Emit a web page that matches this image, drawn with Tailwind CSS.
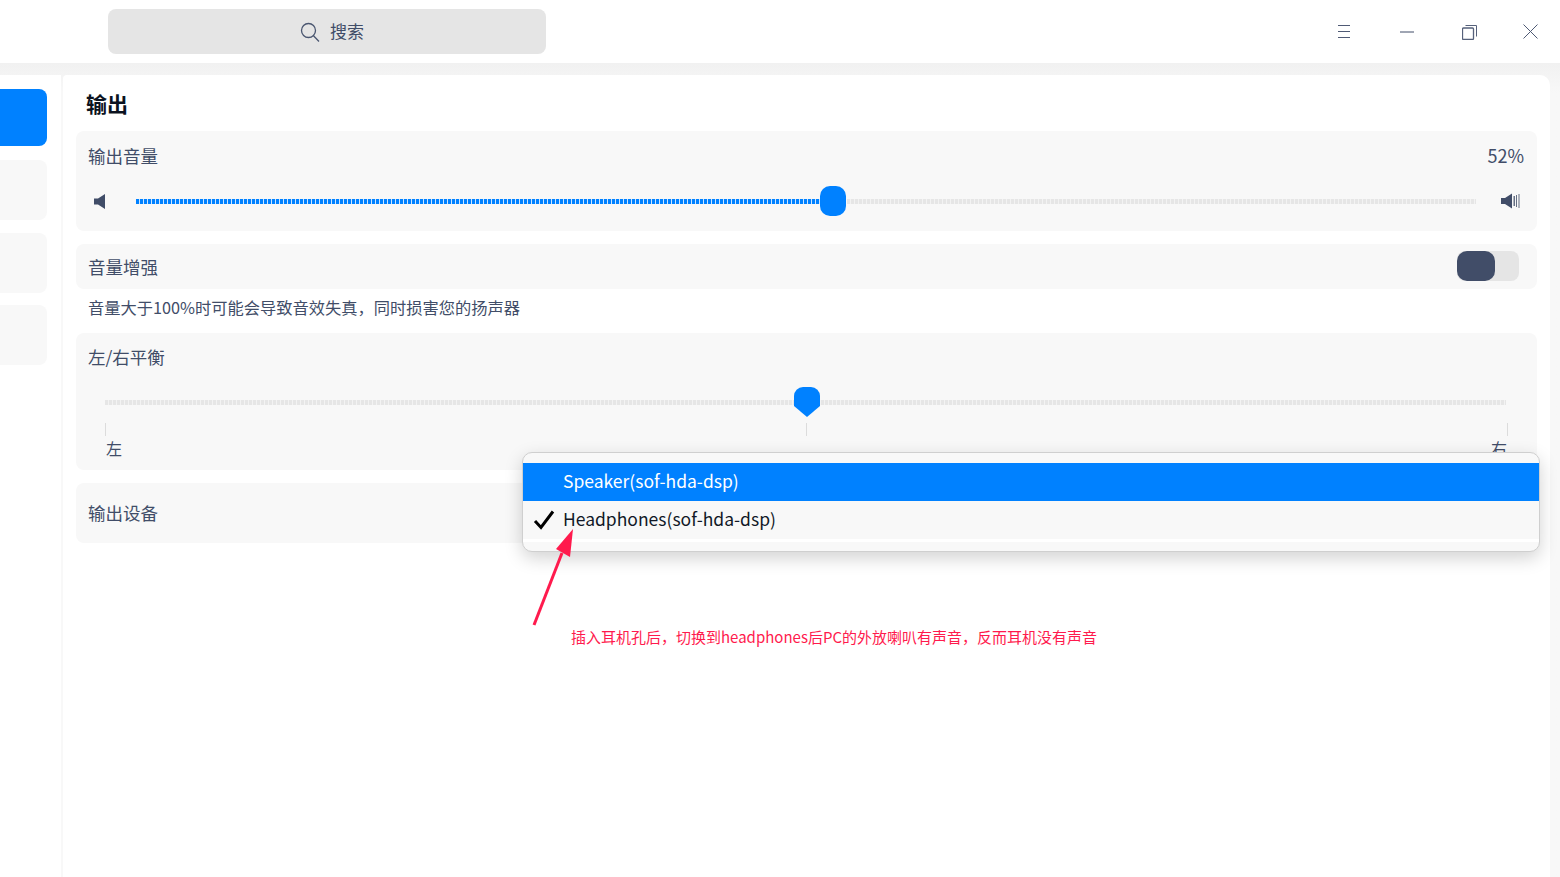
<!DOCTYPE html>
<html lang="zh">
<head>
<meta charset="utf-8">
<script src="https://cdn.jsdelivr.net/npm/@tailwindcss/browser@4"></script>
</head>
<body class="bg-white font-['Noto_Sans_CJK_SC','Noto_Sans',sans-serif] text-[#414d68]">
<div class="relative w-[1560px] h-[877px] overflow-hidden flex flex-col">
  <!-- Title bar -->
  <header class="h-[63px] shrink-0 bg-white flex items-start">
    <div class="ml-[108px] mt-[9px] w-[438px] h-[45px] rounded-[8px] bg-[#e5e5e5] flex items-center justify-center gap-[10px] pl-[10px] text-[17px]">
      <svg width="20" height="20" viewBox="0 0 20 20" fill="none" stroke="#4a5670" stroke-width="1.3"><circle cx="8.500" cy="8.500" r="7"/><path d="M13.500 13.800 19 19.500"/></svg>
      <span class="pb-[2px]">搜索</span>
    </div>
    <div class="ml-auto flex">
      <div class="w-[62px] h-[63px] flex items-center justify-center pl-[2px]">
        <svg width="14" height="13" viewBox="0 0 14 13" fill="none" stroke="#4f5a75" stroke-width="1"><path d="M1 .5h12M1 6.500h12M1 12.500h12"/></svg>
      </div>
      <div class="w-[63px] h-[63px] flex items-center justify-center pl-[2px]">
        <svg width="14" height="2" viewBox="0 0 14 2" fill="none" stroke="#414d68" stroke-width="1"><path d="M0 1h14"/></svg>
      </div>
      <div class="w-[62px] h-[63px] flex items-center justify-center pl-[2px] pt-[1px]">
        <svg width="15" height="15" viewBox="0 0 15 15" fill="none" stroke="#56617b" stroke-width="1"><rect x=".5" y="3" width="11" height="11.500" rx="1" stroke-width="1.300"/><path d="M3.500 .5h11v11"/></svg>
      </div>
      <div class="w-[62px] h-[63px] flex items-center justify-center mr-[-1px]">
        <svg width="15" height="15" viewBox="0 0 15 15" fill="none" stroke="#4f5a75" stroke-width="1"><path d="m.5.5 14 14M14.500.5l-14 14"/></svg>
      </div>
    </div>
  </header>

  <!-- Body -->
  <div class="flex-1 flex pt-[12px] pr-[10px] min-h-0 bg-gradient-to-b from-[#f1f1f1] to-[#f8f8f8] to-[30px]">
    <!-- Sidebar -->
    <aside class="w-[61px] shrink-0 bg-white flex flex-col pt-[14px]">
      <div class="w-[47px] h-[57px] rounded-r-[8px] bg-[#0081ff] mb-[14px]"></div>
      <div class="w-[47px] h-[60px] rounded-r-[8px] bg-[#f8f8f8] mb-[13px]"></div>
      <div class="w-[47px] h-[60px] rounded-r-[8px] bg-[#f8f8f8] mb-[12px]"></div>
      <div class="w-[47px] h-[60px] rounded-r-[8px] bg-[#f8f8f8]"></div>
    </aside>
    <!-- Content -->
    <main class="ml-[2px] flex-1 bg-white rounded-tr-[10px] rounded-tl-[4px] pl-[13px] pr-[13px]">
      <h1 class="h-[56px] pl-[10px] pt-[12px] text-[21px] leading-[32px] font-bold text-[#0b1220]">输出</h1>

      <section class="h-[100px] rounded-[8px] bg-[#f8f8f8] flex flex-col">
        <div class="h-[50px] flex items-center justify-between pl-[12px] pr-[13px] text-[17.500px]">
          <span>输出音量</span><span class="text-[18px] pb-[2px]">52%</span>
        </div>
        <div class="flex items-center pl-[18px] pr-[17px] h-[40px]">
          <svg width="12" height="15" viewBox="0 0 12 15" fill="#414d68" class="shrink-0"><path d="M0 4.500h4L11 0v15L4 10.500H0z"/></svg>
          <div class="relative ml-[30px] flex-1 h-[5px] flex">
            <div class="w-[685px] h-[5px] bg-[repeating-linear-gradient(90deg,#0081ff_0,#0081ff_3px,#cfe6ff_3px,#cfe6ff_4px)]"></div>
            <div class="flex-1 h-[5px] ml-[26px] bg-[repeating-linear-gradient(90deg,#e6e6e6_0,#e6e6e6_3px,#f3f3f3_3px,#f3f3f3_4px)]"></div>
            <div class="absolute left-[684px] top-[-13px] w-[26px] h-[30px] rounded-[10px] bg-[#0081ff]"></div>
          </div>
          <svg width="19" height="16" viewBox="0 0 19 16" fill="#414d68" class="ml-[25px] shrink-0"><path d="M0 5h4l7-4.500v15L4 11H0z"/><path d="M12.500 3h1.500v10h-1.500zM15 2h1v12h-1zM17.500 1h1v14h-1z" opacity=".8"/></svg>
        </div>
      </section>

      <section class="mt-[13px] h-[45px] rounded-[8px] bg-[#f8f8f8] flex items-center justify-between pl-[12px] pr-[18px] text-[17.500px]">
        <span class="pt-[1px]">音量增强</span>
        <div class="w-[62px] h-[30px] mb-[2px] rounded-[8px] bg-[#e5e5e5]">
          <div class="w-[38px] h-[30px] rounded-[10px] bg-[#414d68]"></div>
        </div>
      </section>

      <p class="h-[44px] pl-[12px] pt-[4px] text-[16.250px] leading-[28px]">音量大于100%时可能会导致音效失真，同时损害您的扬声器</p>

      <section class="h-[137px] rounded-[8px] bg-[#f8f8f8] flex flex-col">
        <div class="h-[50px] flex items-center pl-[12px] pb-[1px] text-[17.500px]">左/右平衡</div>
        <div class="relative h-[87px] pl-[29px] pr-[31px]">
          <div class="mt-[17px] h-[5px] bg-[repeating-linear-gradient(90deg,#e6e6e6_0,#e6e6e6_3px,#f3f3f3_3px,#f3f3f3_4px)]"></div>
          <svg class="absolute left-[718px] top-[4px]" width="26" height="30" viewBox="0 0 26 30" fill="#0081ff"><path d="M9 0h8a9 9 0 0 1 9 9v10L13 30 0 19V9a9 9 0 0 1 9-9z"/></svg>
          <div class="flex justify-between mt-[18px] h-[14px] mr-[-1px]">
            <div class="w-[1px] h-[13px] bg-[#dcdcdc]"></div>
            <div class="w-[1px] h-[13px] bg-[#dcdcdc]"></div>
            <div class="w-[1px] h-[13px] bg-[#dcdcdc] mr-[-1px]"></div>
          </div>
          <div class="flex justify-between text-[16px] leading-[24px] pl-[1px] mt-[-1px] mr-[-1px]"><span>左</span><span>右</span></div>
        </div>
      </section>

      <section class="mt-[13px] h-[60px] rounded-[8px] bg-[#f8f8f8] flex items-center pl-[12px] text-[17.500px]">输出设备</section>
    </main>
  </div>

  <!-- Dropdown menu -->
  <div class="absolute left-[522px] top-[452px] w-[1018px] h-[100px] rounded-[10px] border border-[#cfcfcf] bg-[#f8f8f8] shadow-[0_6px_18px_rgba(0,0,0,0.18)] pt-[10px] overflow-hidden text-[17.500px]">
    <div class="h-[38px] bg-[#0081ff] text-white pl-[40px] leading-[36px]">Speaker(sof-hda-dsp)</div>
    <div class="h-[38px] pl-[10px] flex items-center text-[#111827]">
      <svg width="22" height="20" viewBox="0 0 22 20" fill="none" stroke="#000" stroke-width="3" class="shrink-0"><path d="m2 11 6 6.500L20 1.500"/></svg>
      <span class="ml-[8px] pb-[2px]">Headphones(sof-hda-dsp)</span>
    </div>
    <div class="h-[3px] bg-white"></div>
  </div>

  <!-- Annotation -->
  <svg class="absolute left-[525px] top-[525px]" width="55" height="105" viewBox="0 0 55 105" fill="#ff1a4d">
    <path d="M9 100 37 28" stroke="#ff1a4d" stroke-width="3" fill="none"/>
    <path d="M48 4 45 32 31 24z"/>
  </svg>
  <div class="absolute left-[571px] top-[626px] text-[15px] leading-[22px] text-[#ff1a4d]">插入耳机孔后，切换到headphones后PC的外放喇叭有声音，反而耳机没有声音</div>
</div>
</body>
</html>
